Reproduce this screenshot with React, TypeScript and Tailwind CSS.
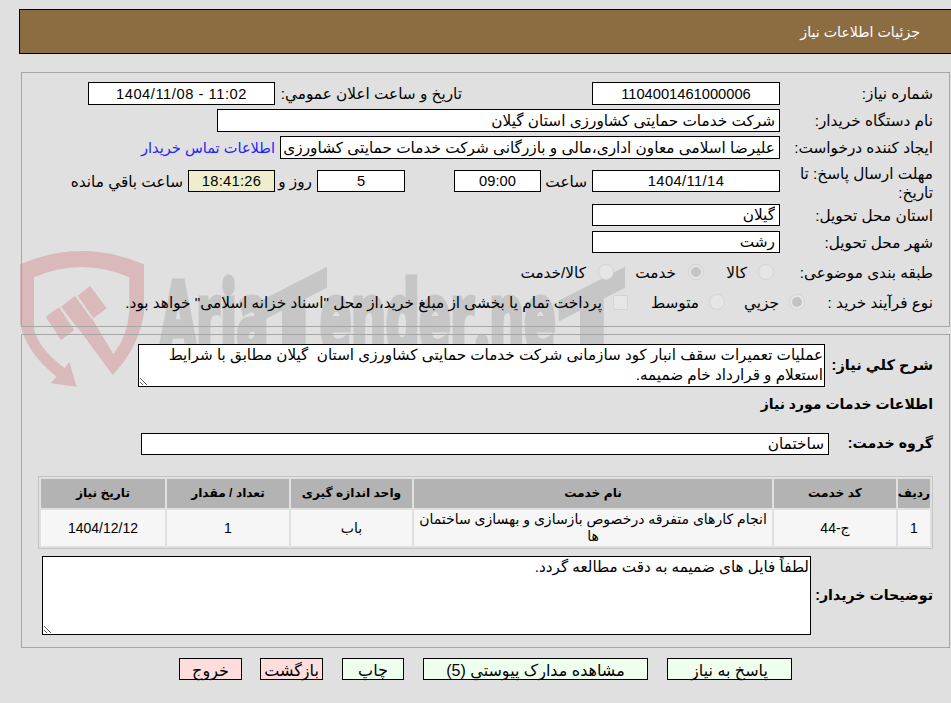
import React from 'react';

const Field = ({ value, className, center = false, ltr = false }: { value: string; className: string; center?: boolean; ltr?: boolean }) => (
  <input
    readOnly
    dir={ltr ? 'ltr' : 'rtl'}
    value={value}
    className={`bg-white border border-black px-1 outline-none shrink-0 ${center ? 'text-center' : 'text-right'} ${ltr ? 'text-[14.7px]' : ''} ${className}`}
  />
);

const Radio = ({ checked = false }: { checked?: boolean }) => (
  <span className="w-4 h-4 rounded-full bg-[#e6e6e6] border border-[#d4d4d4] flex items-center justify-center shrink-0">
    {checked && <span className="w-[10px] h-[10px] rounded-full bg-[#c4c4c4]" />}
  </span>
);

const Choice = ({ label, width, checked, gap }: { label: string; width: string; checked?: boolean; gap: string }) => (
  <div className={`flex items-center shrink-0 ${width}`}>
    <Radio checked={checked} />
    <span className={`pt-[2px] ${gap}`}>{label}</span>
  </div>
);

const Watermark = () => (
  <div className="absolute left-0 top-0 w-[951px] h-[703px] overflow-hidden z-0">
    <svg className="absolute left-[10px] top-[245px]" width="160" height="150" viewBox="0 0 480 450" fill="#d9b9ba">
      <path d="M30 58 Q215 -22 402 58 L402 205 Q385 310 308 390 L205 250 L245 218 L310 328 Q352 275 358 200 L358 97 Q215 35 72 97 L72 255 Q90 315 165 370 L178 350 L200 425 L122 415 L140 395 Q50 325 30 235 Z" />
      <path d="M203 152 L240 123 L290 190 L250 220 Z" />
      <path d="M153 185 L195 153 L245 222 L205 252 Z" />
      <path d="M107 215 L147 187 L193 255 L153 285 Z" />
    </svg>
    <div
      dir="ltr"
      className="absolute left-[160px] top-[270px] flex h-[90px] text-[96px] leading-[90px] text-[#c6c6c6] font-bold whitespace-nowrap font-['Open_Sans'] [-webkit-text-stroke:7px_#c6c6c6]"
    >
      <span className="inline-block w-[102px] scale-x-[0.55] origin-left">Aria</span>
      <span className="inline-block w-[58px] text-[110px] translate-y-[24px] -skew-y-[27deg] origin-bottom-left">T</span>
      <span className="inline-block w-[240px] scale-x-[0.55] origin-left">ender.ne</span>
      <span className="inline-block text-[110px] translate-y-[24px] -skew-y-[27deg] origin-bottom-left">T</span>
    </div>
  </div>
);

const columns = [
  { title: 'ردیف', value: '1', width: 'w-[32px]' },
  { title: 'کد خدمت', value: 'ج-44', width: 'w-[122px]' },
  { title: 'نام خدمت', value: 'انجام کارهای متفرقه درخصوص بازسازی و بهسازی ساختمان ها', width: 'w-[358px]' },
  { title: 'واحد اندازه گیری', value: 'باب', width: 'w-[121px]' },
  { title: 'تعداد / مقدار', value: '1', width: 'w-[122px]' },
  { title: 'تاریخ نیاز', value: '1404/12/12', width: 'w-[124px]' },
];

export default function App() {
  return (
    <div
      dir="rtl"
      className="relative w-[951px] h-[703px] overflow-hidden bg-[#e0e0e0] text-black text-[15.3px] font-['Liberation_Sans','DejaVu_Sans',sans-serif]"
    >
      <Watermark />
      <div className="relative z-10 pt-[9px]">
        {/* Title bar */}
        <div className="mr-0 ml-[19px] h-[45px] bg-[#8c6d42] border-y border-l border-black flex items-center pr-[31px] pt-[2px] text-white text-[14.2px]">
          جزئیات اطلاعات نیاز
        </div>

        {/* Main info */}
        <div className="mt-[18px] ml-[21px] mr-[1px] border border-[#a6a6a6] pt-[9px] pb-[15px] pr-[16px]">
          <div className="flex items-center h-[23px]">
            <label className="w-[153px] pt-[2px]">شماره نیاز:</label>
            <Field value="1104001461000006" center ltr className="w-[188px] h-[23px]" />
            <label className="w-[317px] pr-[130px] pt-[2px] shrink-0">تاریخ و ساعت اعلان عمومي:</label>
            <Field value="1404/11/08 - 11:02" center ltr className="w-[187px] h-[23px] tracking-[0.55px]" />
          </div>
          <div className="flex items-center h-[23px] mt-1">
            <label className="w-[153px] pt-[2px]">نام دستگاه خریدار:</label>
            <Field value="شرکت خدمات حمایتی کشاورزی استان گیلان" className="w-[563px] h-[23px]" />
          </div>
          <div className="flex items-center h-[23px] mt-1">
            <label className="w-[153px] pt-[2px]">ایجاد کننده درخواست:</label>
            <Field
              value="علیرضا اسلامی معاون اداری،مالی و بازرگانی شرکت خدمات حمایتی کشاورزی استان گیلان"
              className="w-[500px] h-[23px] !pl-[2px]"
            />
            <a className="pr-[5px] pt-[2px] text-[#2222ff] text-[14.6px]">اطلاعات تماس خریدار</a>
          </div>
          <div className="flex items-center h-[22px] mt-[11px]">
            <label className="w-[153px] self-start leading-[19px] -mt-[6px]">مهلت ارسال پاسخ: تا تاریخ:</label>
            <Field value="1404/11/14" center ltr className="w-[188px] h-[22px] tracking-[0.4px]" />
            <span className="w-[51px] pr-[5px] pt-[2px]">ساعت</span>
            <Field value="09:00" center ltr className="w-[87px] h-[22px]" />
            <Field value="5" center ltr className="w-[88px] h-[22px] mr-[49px]" />
            <span className="w-[42px] pr-[5px] pt-[2px]">روز و</span>
            <Field value="18:41:26" center ltr className="w-[87px] h-[22px] !bg-[#eeeecc] tracking-[0.3px]" />
            <span className="pr-[5px] pt-[2px]">ساعت باقي مانده</span>
          </div>
          <div className="flex items-center h-[22px] mt-3">
            <label className="w-[153px] pt-[2px]">استان محل تحویل:</label>
            <Field value="گیلان" className="w-[188px] h-[22px]" />
          </div>
          <div className="flex items-center h-[22px] mt-[5px]">
            <label className="w-[153px] pt-[2px]">شهر محل تحویل:</label>
            <Field value="رشت" className="w-[188px] h-[22px]" />
          </div>
          <div className="flex items-center h-[18px] mt-[10px]">
            <label className="w-[159px] pt-[2px]">طبقه بندی موضوعی:</label>
            <Choice label="کالا" width="w-[70px]" gap="mr-[11px]" />
            <Choice label="خدمت" width="w-[90px]" gap="mr-[12px]" checked />
            <Choice label="کالا/خدمت" width="w-[120px]" gap="mr-[12px]" />
          </div>
          <div className="flex items-center h-[18px] mt-3">
            <label className="w-[128px] pt-[2px]">نوع فرآیند خرید :</label>
            <Choice label="جزيي" width="w-[80px]" gap="mr-[10px]" checked />
            <Choice label="متوسط" width="w-[97px]" gap="mr-[10px]" />
            <span className="w-[15px] h-[15px] rounded-[2px] bg-[#e6e6e6] border border-[#d4d4d4] shrink-0" />
            <span className="mr-[11px] pt-[2px] whitespace-nowrap">
              پرداخت تمام یا بخشی از مبلغ خرید،از محل "اسناد خزانه اسلامی" خواهد بود.
            </span>
          </div>
        </div>

        {/* Service info */}
        <div className="mt-[7px] ml-[21px] mr-[1px] border border-[#a6a6a6] pt-[9px] pb-3 pr-[16px]">
          <div className="flex items-center">
            <label className="w-[108px] font-bold text-[14.6px]">شرح کلي نیاز:</label>
            <textarea
              readOnly
              className="w-[687px] h-[43px] bg-white border border-black px-[1px] leading-5 outline-none resize-y text-[15.2px]"
              value="عملیات تعمیرات سقف انبار کود سازمانی شرکت خدمات حمایتی کشاورزی استان  گیلان مطابق با شرایط استعلام و قرارداد خام ضمیمه."
            />
          </div>
          <div className="mt-[7px] h-5 font-bold text-[14px] leading-5">اطلاعات خدمات مورد نیاز</div>
          <div className="flex items-center mt-[19px]">
            <label className="w-[104px] font-bold text-[14.2px]">گروه خدمت:</label>
            <Field value="ساختمان" className="w-[688px] h-[22px]" />
          </div>
          <table className="mt-[21px] w-[895px] table-fixed border-separate border-spacing-[2px] border border-[#c4c4c4] text-center text-[14px]">
            <colgroup>
              {columns.map((c) => (
                <col key={c.title} className={c.width} />
              ))}
            </colgroup>
            <thead>
              <tr className="h-[29px]">
                {columns.map((c) => (
                  <th key={c.title} className="p-0 bg-[#b3b3b3] font-bold text-[12.2px]">
                    {c.title}
                  </th>
                ))}
              </tr>
            </thead>
            <tbody>
              <tr className="h-[36px]">
                {columns.map((c) => (
                  <td key={c.title} className="p-0 bg-[#f6f6f6] leading-[17px]">
                    {c.value}
                  </td>
                ))}
              </tr>
            </tbody>
          </table>
          <div className="flex items-center mt-[7px]">
            <label className="w-[122px] font-bold text-[14.2px] whitespace-nowrap">توضیحات خریدار:</label>
            <textarea
              readOnly
              className="w-[769px] h-[79px] bg-white border border-black px-[1px] leading-5 outline-none resize-y text-[15.2px]"
              value="لطفاً فایل های ضمیمه به دقت مطالعه گردد."
            />
          </div>
        </div>

        {/* Actions */}
        <div className="flex mt-[10px] mr-[159px] text-[16px]">
          <button className="w-[125px] h-[22px] bg-[#eeffee] border border-black">پاسخ به نیاز</button>
          <button className="w-[225px] h-[22px] mr-[19px] bg-[#eeffee] border border-black">مشاهده مدارک پیوستي (5)</button>
          <button className="w-[62px] h-[22px] mr-[19px] bg-[#eeffee] border border-black">چاپ</button>
          <button className="w-[63px] h-[22px] mr-[19px] bg-[#ffdddd] border border-black">بازگشت</button>
          <button className="w-[63px] h-[22px] mr-[18px] bg-[#ffdddd] border border-black">خروج</button>
        </div>
      </div>
    </div>
  );
}
